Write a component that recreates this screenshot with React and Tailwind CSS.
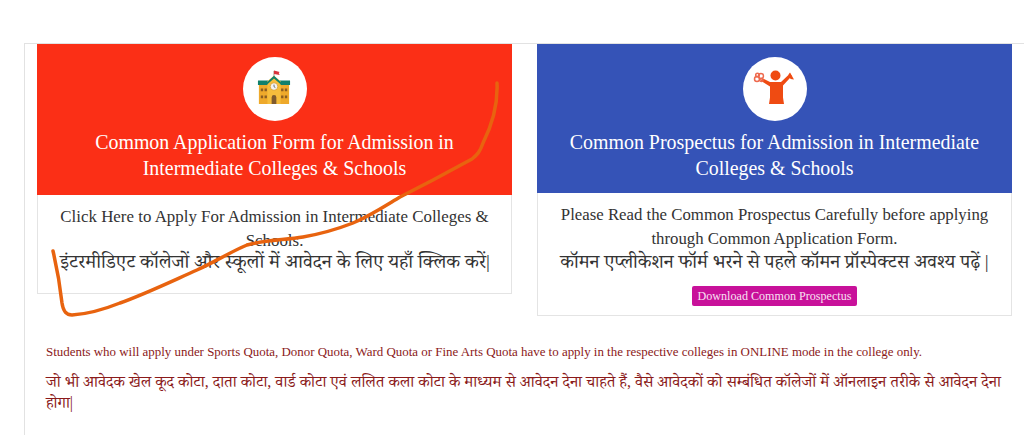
const serif = "font-['Liberation_Serif','Noto_Serif_Devanagari','Noto_Sans_Devanagari','Noto_Sans',serif]";

function School() {
  return (
    <svg width="34" height="34" viewBox="0 0 36 36" className="-mt-[4px] -ml-[1px]">
      <path d="M18 7V1" stroke="#7a5a3a" strokeWidth="0.7" />
      <path d="M18 0.500l6 1.500-1 1.200 1 2-6-1z" fill="#d8343c" />
      <path d="M2 15h32v21H2z" fill="#eea92b" />
      <path d="M1 11h11v5H1zM24 11h11v5H24z" fill="#10806c" />
      <path d="M11 36V12l7-6 7 6v24z" fill="#f6bd3c" />
      <path d="M9.500 14L18 6l8.500 8-1.500 1L18 9l-7 6z" fill="#10806c" />
      <circle cx="18" cy="17.500" r="4" fill="#f4f4f4" stroke="#d89a22" strokeWidth="0.8" />
      <path d="M18 15.500v2.200l1.500 1" stroke="#444" strokeWidth="0.8" fill="none" />
      <path d="M15.500 36v-7a2.500 2.500 0 0 1 5 0v7z" fill="#7f5a2d" />
      <path d="M4 19.500h2.500v3H4zM8 19.500h2.500v3H8zM25.500 19.500H28v3h-2.500zM29.500 19.500H32v3h-2.500zM4 27h2.500v3H4zM8 27h2.500v3H8zM25.500 27H28v3h-2.500zM29.500 27H32v3h-2.500z" fill="#8a5d22" />
    </svg>
  );
}

function Graduate() {
  return (
    <svg width="42" height="34" viewBox="0 0 42 34" className="-mt-[5px] -ml-[1px]">
      <circle cx="22.500" cy="5.500" r="5" fill="#ef4b12" />
      <path d="M9 8l8 4h11l9-8.500 1.800 2.500-8.800 9.500v12l1 6.500H16l1-6.500V16.500L8 11z" fill="#ef4b12" />
      <path d="M35.500 4.500l1.500-2 4 7-3.500-.5z" fill="#ef4b12" />
      <g fill="none" stroke="#ee6a4e" strokeWidth="1.500">
        <circle cx="4" cy="9" r="2.500" />
        <circle cx="8" cy="6" r="2.500" />
        <circle cx="4.500" cy="5" r="1.800" />
        <circle cx="8.500" cy="10" r="1.600" />
      </g>
    </svg>
  );
}

function Card({ color, icon, title, headerH, children, iconMt, titleMt }) {
  return (
    <div className="w-[475px] shrink-0 self-start border-x border-b border-[#e4e4e4] bg-white">
      <div className={`-mx-px flex flex-col items-center ${headerH} ${color}`}>
        <div className={`flex h-[64px] w-[64px] items-center justify-center rounded-full bg-white ${iconMt}`}>{icon}</div>
        <h2 className={`px-[30px] text-center text-[19.900px] leading-[26px] font-normal text-white ${titleMt}`}>{title}</h2>
      </div>
      {children}
    </div>
  );
}

export default function App() {
  return (
    <div className={`relative h-[435px] w-[1024px] overflow-hidden bg-white ${serif}`}>
      <div className="ml-6 h-[392px] translate-y-[43px] border-t border-l border-[#e2e2e2] pl-3">
        <div className="flex h-[272px] gap-[25px]">
          <Card
            color="bg-[#fb2f16]"
            headerH="h-[151px]"
            iconMt="mt-[13px]"
            titleMt="mt-[8px]"
            icon={<School />}
            title="Common Application Form for Admission in Intermediate Colleges & Schools"
          >
            <div className="h-[98px] px-[22px] pt-[10px] text-center text-[#333]">
              <p className="text-[16.900px] leading-[24px]">Click Here to Apply For Admission in Intermediate Colleges &amp; Schools.</p>
              <p className="-mt-[3px] text-[19.500px] leading-[24px] whitespace-nowrap">इंटरमीडिएट कॉलेजों और स्कूलों में आवेदन के लिए यहाँ क्लिक करें|</p>
            </div>
          </Card>
          <Card
            color="bg-[#3553b7]"
            headerH="h-[149px]"
            iconMt="mt-[13px]"
            titleMt="mt-[8px]"
            icon={<Graduate />}
            title="Common Prospectus for Admission in Intermediate Colleges & Schools"
          >
            <div className="flex h-[122px] flex-col items-center px-[22px] pt-[10px] text-center text-[#333]">
              <p className="text-[16.800px] leading-[24px]">Please Read the Common Prospectus Carefully before applying through Common Application Form.</p>
              <p className="-mt-[1px] text-[19.300px] leading-[24px] whitespace-nowrap">कॉमन एप्लीकेशन फॉर्म भरने से पहले कॉमन प्रॉस्पेक्टस अवश्य पढ़ें |</p>
              <button className="mt-[12px] h-[20px] w-[165px] rounded-[2px] bg-[#c8119a] text-[12.100px] text-[#f8e0f2]">Download Common Prospectus</button>
            </div>
          </Card>
        </div>
        <div className="pt-[27px] pl-[9px] pr-[12px] text-[#8b1a1a]">
          <p className="text-[12.930px] leading-[18px]">Students who will apply under Sports Quota, Donor Quota, Ward Quota or Fine Arts Quota have to apply in the respective colleges in ONLINE mode in the college only.</p>
          <p className="mt-[10px] text-[16.030px] leading-[21px]">जो भी आवेदक खेल कूद कोटा, दाता कोटा, वार्ड कोटा एवं ललित कला कोटा के माध्यम से आवेदन देना चाहते हैं, वैसे आवेदकों को सम्बंधित कॉलेजों में ऑनलाइन तरीके से आवेदन देना होगा|</p>
        </div>
      </div>
      <svg className="pointer-events-none absolute top-0 left-0" width="1024" height="435" viewBox="0 0 1024 435" fill="none">
        <path
          d="M497 83C498 105 492 125 483 143C480 152 477 155 472 159L433 180L400 197C385 206 370 216 353 223C335 230 320 234 303 237C285 240 265 240 247 245C230 252 215 262 197 270C170 282 145 294 120 303C105 309 90 314 72 315C65 315 63 310 62 303C60 285 57 268 53 251"
          stroke="#e8630f"
          strokeWidth="3.500"
          strokeLinecap="round"
          strokeLinejoin="round"
        />
      </svg>
    </div>
  );
}
